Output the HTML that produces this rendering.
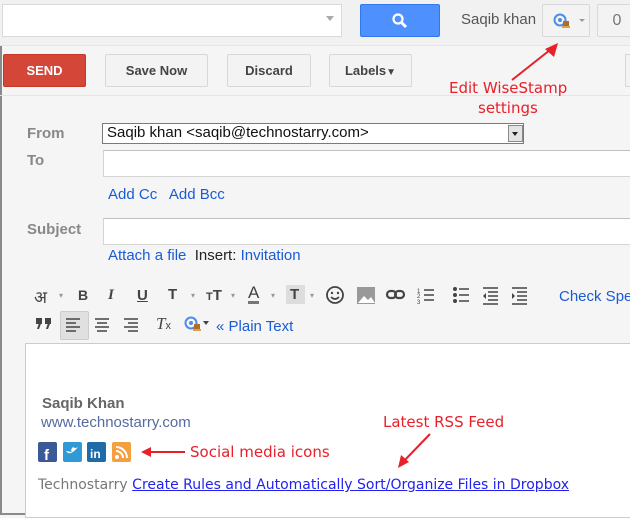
<!DOCTYPE html>
<html><head><style>
*{margin:0;padding:0;box-sizing:border-box}
body{width:630px;height:515px;overflow:hidden;background:#f5f5f5;font-family:"Liberation Sans",Arial,sans-serif;position:relative}
.a{position:absolute;white-space:nowrap}
.btn{position:absolute;border:1px solid #d8d8d8;border-radius:2px;background:#f3f3f3;font-weight:bold;font-size:13px;color:#444;text-align:center;line-height:31px;height:33px}
.lbl{position:absolute;color:#888;font-size:15px;font-weight:bold}
.inp{position:absolute;background:#fff;border:1px solid #d4d4d4;border-top-color:#c0c0c0}
.lnk{color:#1a5bd6;font-size:15px}
.red{color:#e8202a;font-family:"DejaVu Sans",sans-serif;font-size:15px}
.tb{position:absolute;color:#444;font-weight:bold;font-size:15px}
.dd{position:absolute;color:#999;font-size:8px}
</style></head><body>
<div class="a" style="left:0;top:0;width:630px;height:515px;border:2px solid #8a8a8a;border-right:none;border-top:none;"></div>
<div class="a" style="left:0;top:0;width:630px;height:46px;background:#f1f1f1;border-bottom:1px solid #e5e5e5"></div>
<div class="inp" style="left:2px;top:4px;width:340px;height:33px;border-color:#d9d9d9"></div>
<div class="a" style="left:326px;top:16px;width:0;height:0;border:4px solid transparent;border-top:5px solid #aaa"></div>
<div class="a" style="left:360px;top:4px;width:80px;height:33px;background:#4d90fe;border:1px solid #3079ed;border-radius:2px"></div>
<svg class="a" style="left:391px;top:12px" width="18" height="18" viewBox="0 0 18 18"><circle cx="7" cy="7" r="4.5" fill="none" stroke="#fff" stroke-width="2.2"/><path d="M10.5 10.5L15 15" stroke="#fff" stroke-width="3"/></svg>
<div class="a" style="left:461px;top:11px;font-size:15px;color:#555">Saqib khan</div>
<div class="btn" style="left:542px;top:4px;width:48px;height:33px"></div>
<svg class="a" style="left:553px;top:12px" width="20" height="18"><circle cx="7" cy="8" r="5.5" fill="none" stroke="#4d8ce8" stroke-width="2"/><circle cx="7" cy="8" r="2" fill="#4d8ce8"/><rect x="10" y="9" width="6" height="6" fill="#b36b2a"/><rect x="9" y="14" width="8" height="2" fill="#d9a24e"/></svg>
<div class="a" style="left:579px;top:19px;width:0;height:0;border:3px solid transparent;border-top:3px solid #999"></div>
<div class="btn" style="left:597px;top:4px;width:40px;height:33px;font-weight:normal;font-size:16px;color:#777">0</div>
<div class="btn" style="left:3px;top:54px;width:83px;background:#d44638;border-color:#c53727;color:#fff">SEND</div>
<div class="btn" style="left:105px;top:54px;width:103px">Save Now</div>
<div class="btn" style="left:227px;top:54px;width:84px">Discard</div>
<div class="btn" style="left:329px;top:54px;width:83px">Labels<span style="font-size:10px">&#9660;</span></div>
<div class="a" style="left:625px;top:54px;width:10px;height:33px;border:1px solid #d8d8d8;background:#f3f3f3"></div>
<div class="a" style="left:0;top:95px;width:630px;height:1px;background:#e5e5e5"></div>
<svg class="a" style="left:505px;top:40px" width="60" height="45"><path d="M7 40L50 6" stroke="#e8202a" stroke-width="2"/><path d="M53 3L40 9L49 17Z" fill="#e8202a"/></svg>
<div class="a red" style="left:449px;top:79px">Edit WiseStamp</div>
<div class="a red" style="left:478px;top:99px">settings</div>
<div class="lbl" style="left:27px;top:125px">From</div>
<div class="a" style="left:102px;top:123px;width:422px;height:21px;background:#fff;border:1px solid #7a7a7a"></div>
<div class="a" style="left:107px;top:124px;font-size:15px;color:#111">Saqib khan &lt;saqib@technostarry.com&gt;</div>
<div class="a" style="left:508px;top:125px;width:15px;height:17px;background:#e4e4e4;border:1px solid #888"></div>
<div class="a" style="left:512px;top:132px;width:0;height:0;border:3px solid transparent;border-top:4px solid #222"></div>
<div class="lbl" style="left:27px;top:152px">To</div>
<div class="inp" style="left:103px;top:150px;width:540px;height:27px"></div>
<div class="a lnk" style="left:108px;top:186px">Add Cc&nbsp;&nbsp; Add Bcc</div>
<div class="lbl" style="left:27px;top:221px">Subject</div>
<div class="inp" style="left:103px;top:218px;width:540px;height:27px"></div>
<div class="a lnk" style="left:108px;top:247px">Attach a file <span style="color:#222">&nbsp;Insert:</span> Invitation</div>
<div class="a" style="left:34px;top:283px;font-size:17px;color:#444;font-family:'Noto Sans CJK SC',sans-serif">अ</div>
<div class="tb" style="left:78px;top:287px;font-size:14px">B</div>
<div class="tb" style="left:108px;top:287px;font-style:italic;font-family:'Liberation Serif',serif">I</div>
<div class="tb" style="left:137px;top:287px;text-decoration:underline">U</div>
<div class="tb" style="left:168px;top:286px">T</div>
<div class="tb" style="left:206px;top:287px"><span style="font-size:11px">T</span>T</div>
<div class="tb" style="left:248px;top:284px;font-weight:normal;font-size:17px;border-bottom:3px solid #777;line-height:17px">A</div>
<div class="a" style="left:286px;top:285px;width:19px;height:19px;background:#ddd"></div>
<div class="tb" style="left:290px;top:286px">T</div>
<div class="dd" style="left:59px;top:291px">▾</div><div class="dd" style="left:191px;top:291px">▾</div><div class="dd" style="left:231px;top:291px">▾</div><div class="dd" style="left:271px;top:291px">▾</div><div class="dd" style="left:310px;top:291px">▾</div>
<svg class="a" style="left:325px;top:284px" width="210" height="22">
<circle cx="10" cy="11" r="8" fill="none" stroke="#444" stroke-width="1.8"/><circle cx="7" cy="9" r="1.2" fill="#444"/><circle cx="13" cy="9" r="1.2" fill="#444"/><path d="M6 13Q10 17 14 13" stroke="#444" stroke-width="1.6" fill="none"/>
<rect x="32" y="3" width="18" height="17" fill="#999"/><path d="M33 19L39 12L43 16L46 13L50 19Z" fill="#fff"/>
<rect x="62" y="7" width="9" height="7" rx="3.5" fill="none" stroke="#444" stroke-width="2.2"/><rect x="70" y="7" width="9" height="7" rx="3.5" fill="none" stroke="#444" stroke-width="2.2"/>
<path d="M99 6h10M99 11h10M99 16h10" stroke="#444" stroke-width="1.6"/><text x="92" y="9" font-size="6" fill="#444">1</text><text x="92" y="14" font-size="6" fill="#444">2</text><text x="92" y="20" font-size="6" fill="#444">3</text>
<circle cx="130" cy="5" r="2" fill="#444"/><circle cx="130" cy="11" r="2" fill="#444"/><circle cx="130" cy="17" r="2" fill="#444"/><path d="M134 5h10M134 11h10M134 17h10" stroke="#444" stroke-width="1.6"/>
<path d="M158 4h15M163 8h10M163 12h10M163 16h10M158 20h15" stroke="#444" stroke-width="1.5"/><path d="M161 9L158 12L161 15Z" fill="#444"/>
<path d="M187 4h15M192 8h10M192 12h10M192 16h10M187 20h15" stroke="#444" stroke-width="1.5"/><path d="M187 9L190 12L187 15Z" fill="#444"/>
</svg>
<div class="a lnk" style="left:559px;top:288px">Check Spelling</div>
<svg class="a" style="left:36px;top:318px" width="16" height="12"><rect x="0" y="0" width="6" height="6" fill="#444"/><path d="M6 3L3 11H1L3 5Z" fill="#444"/><rect x="9" y="0" width="6" height="6" fill="#444"/><path d="M15 3L12 11H10L12 5Z" fill="#444"/></svg>
<div class="a" style="left:60px;top:311px;width:29px;height:29px;background:#e0e0e0;border:1px solid #ccc;border-radius:2px"></div>
<svg class="a" style="left:64px;top:316px" width="85" height="18"><path d="M2 3h14M2 7h10M2 11h14M2 15h10" stroke="#444" stroke-width="1.6"/><path d="M31 3h14M33 7h10M31 11h14M33 15h10" stroke="#444" stroke-width="1.6"/><path d="M60 3h14M64 7h10M60 11h14M64 15h10" stroke="#444" stroke-width="1.6"/></svg>
<div class="tb" style="left:156px;top:314px;font-style:italic;font-weight:normal;font-size:17px;font-family:'Liberation Serif',serif">T<span style="font-size:11px;font-style:normal;font-family:sans-serif">x</span></div>
<svg class="a" style="left:184px;top:315px" width="26" height="18"><circle cx="7" cy="8" r="5.5" fill="none" stroke="#4d8ce8" stroke-width="2"/><circle cx="7" cy="8" r="2" fill="#4d8ce8"/><rect x="10" y="9" width="6" height="6" fill="#b36b2a"/><rect x="9" y="14" width="8" height="2" fill="#d9a24e"/><path d="M19 6h6l-3 4z" fill="#444"/></svg>
<div class="a lnk" style="left:216px;top:318px">« Plain Text</div>
<div class="a" style="left:25px;top:343px;width:610px;height:175px;background:#fff;border:1px solid #ccc"></div>
<div class="a" style="left:42px;top:395px;font-size:15px;font-weight:bold;color:#666">Saqib Khan</div>
<div class="a" style="left:41px;top:414px;font-size:15px;color:#556ba0">www.technostarry.com</div>
<svg class="a" style="left:38px;top:442px" width="95" height="20">
<rect x="0" y="0" width="19" height="20" rx="2" fill="#3b5998"/><text x="6" y="18" font-size="15" font-weight="bold" fill="#fff" font-family="Liberation Sans">f</text>
<rect x="25" y="0" width="19" height="20" rx="2" fill="#2f9ad6"/><path d="M28 9q4 6 12-4q-3 2-5 0q-3 3-1 5z" fill="#fff"/>
<rect x="49" y="0" width="19" height="20" rx="2" fill="#1d6ca9"/><text x="52" y="16" font-size="12" font-weight="bold" fill="#fff" font-family="Liberation Sans">in</text>
<rect x="74" y="0" width="19" height="20" rx="2" fill="#f4a040"/><circle cx="79" cy="15" r="2" fill="#fff"/><path d="M78 9a7 7 0 0 1 7 7M78 5a11 11 0 0 1 11 11" stroke="#fff" stroke-width="2" fill="none"/>
</svg>
<svg class="a" style="left:140px;top:444px" width="50" height="16"><path d="M5 8H45" stroke="#e8202a" stroke-width="2"/><path d="M1 8L11 3V13Z" fill="#e8202a"/></svg>
<div class="a red" style="left:190px;top:443px">Social media icons</div>
<div class="a red" style="left:383px;top:413px">Latest RSS Feed</div>
<svg class="a" style="left:395px;top:432px" width="40" height="38"><path d="M35 2L8 30" stroke="#e8202a" stroke-width="2"/><path d="M3 36L6 23L14 30Z" fill="#e8202a"/></svg>
<div class="a" style="left:38px;top:477px;color:#777;font-family:'DejaVu Sans',sans-serif;font-size:14px">Technostarry <span style="color:#2222ee;text-decoration:underline">Create Rules and Automatically Sort/Organize Files in Dropbox</span></div>
</body></html>
